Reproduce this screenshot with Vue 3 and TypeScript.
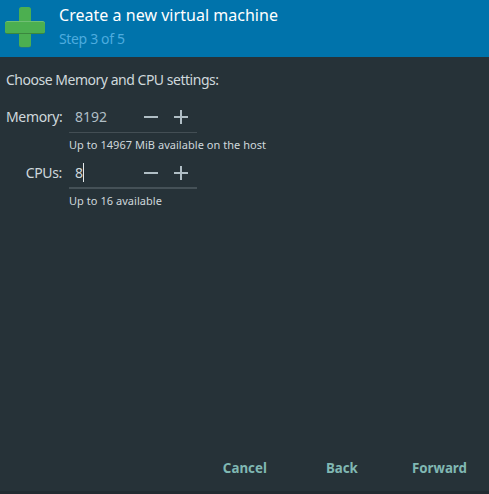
<script setup lang="ts">
import { ref } from 'vue'

interface Resource {
  label: string
  value: number
  hint: string
  focused: boolean
}

const resources = ref<Resource[]>([
  { label: 'Memory:', value: 8192, hint: 'Up to 14967 MiB available on the host', focused: false },
  { label: 'CPUs:', value: 8, hint: 'Up to 16 available', focused: true },
])

function step(item: Resource, amount: number) {
  item.value = Math.max(1, item.value + amount)
}
</script>

<template>
  <main class="wizard">
    <header class="header">
      <svg class="logo" viewBox="0 0 40 41" width="40" height="41">
        <rect x="14" y="1" width="12" height="39.5" rx="2.5" fill="#3b7e66" />
        <rect x="14" y="0" width="12" height="40" rx="2.5" fill="#4caf50" />
        <rect x="0" y="15" width="40" height="12" rx="2.5" fill="#3b873e" />
        <rect x="0" y="14" width="40" height="12" rx="2.5" fill="#70bf73" />
        <rect x="0" y="15" width="40" height="11" rx="2" fill="#4caf50" />
      </svg>
      <div class="titles">
        <h1>Create a new virtual machine</h1>
        <p>Step 3 of 5</p>
      </div>
    </header>
    <section class="content">
      <p class="intro">Choose Memory and CPU settings:</p>
      <div v-for="item in resources" :key="item.label" class="row">
        <span class="label">{{ item.label }}</span>
        <div class="field">
          <div class="spin" :class="{ focused: item.focused }">
            <span class="value">{{ item.value }}</span>
            <button type="button" aria-label="Decrease" @click="step(item, -1)">
              <svg width="14" height="14" viewBox="0 0 14 14"><path d="M0 6h14v2H0z" /></svg>
            </button>
            <button type="button" aria-label="Increase" @click="step(item, 1)">
              <svg width="14" height="14" viewBox="0 0 14 14"><path d="M0 6h6V0h2v6h6v2H8v6H6V8H0z" /></svg>
            </button>
          </div>
          <p class="hint">{{ item.hint }}</p>
        </div>
      </div>
    </section>
    <footer class="actions">
      <button type="button" class="cancel">Cancel</button>
      <button type="button" class="back">Back</button>
      <button type="button" class="forward">Forward</button>
    </footer>
  </main>
</template>

<style>
body {
  background: #263238;
}
</style>

<style scoped>
.wizard {
  box-sizing: border-box;
  height: 494px;
  display: flex;
  flex-direction: column;
  background: #263238;
  border-bottom: 3px solid #222b31;
  color: #cfd8dc;
  font: 14px/18px "Noto Sans", sans-serif;
}
h1,
p {
  margin: 0;
  font-weight: 400;
  white-space: nowrap;
}
button {
  border: 0;
  padding: 0;
  background: none;
  font: inherit;
  color: inherit;
}
.header {
  box-sizing: border-box;
  height: 57px;
  display: flex;
  align-items: flex-start;
  gap: 14px;
  padding: 4px 5px 0;
  background: #0073ab;
}
.logo {
  margin-top: 3px;
}
.titles h1 {
  color: #fff;
  font-size: 16px;
  line-height: 22px;
  letter-spacing: 0.03px;
}
.titles p {
  margin-top: 4px;
  color: #4dacdf;
  letter-spacing: -0.35px;
}
.content {
  flex: 1;
  padding: 14px 6px 0;
}
.intro {
  margin-bottom: 13px;
  letter-spacing: -0.48px;
}
.row {
  display: grid;
  grid-template-columns: 56px auto;
  column-gap: 7px;
  height: 56px;
}
.label {
  text-align: right;
  line-height: 30px;
  letter-spacing: -0.35px;
}
.spin {
  box-sizing: border-box;
  width: 128px;
  height: 31px;
  padding: 0 1px 0 6px;
  display: flex;
  align-items: center;
  border-bottom: 1px solid #434e54;
  color: #b0bec5;
}
.spin.focused {
  padding-top: 1px;
  border-bottom-width: 2px;
  border-bottom-color: #455157;
}
.value {
  flex: 1;
  display: flex;
  align-items: center;
  height: 20px;
  line-height: 20px;
}
.focused .value {
  color: #cfd8dc;
}
.focused .value::after {
  content: "";
  width: 1px;
  height: 19px;
  margin-bottom: 1px;
  background: #e4e9eb;
}
.spin button {
  width: 30px;
  height: 26px;
  display: flex;
  align-items: center;
  justify-content: center;
}
.spin svg {
  fill: #b0bec5;
}
.hint {
  font-size: 11px;
  line-height: 16px;
  margin-top: 4px;
  letter-spacing: 0.04px;
}
.actions {
  display: flex;
  justify-content: flex-end;
  padding: 0 22px 14px 0;
  color: #80b8b3;
  font-size: 13.33px;
  font-weight: 700;
}
.back {
  margin: 0 54px 0 59px;
}
</style>
